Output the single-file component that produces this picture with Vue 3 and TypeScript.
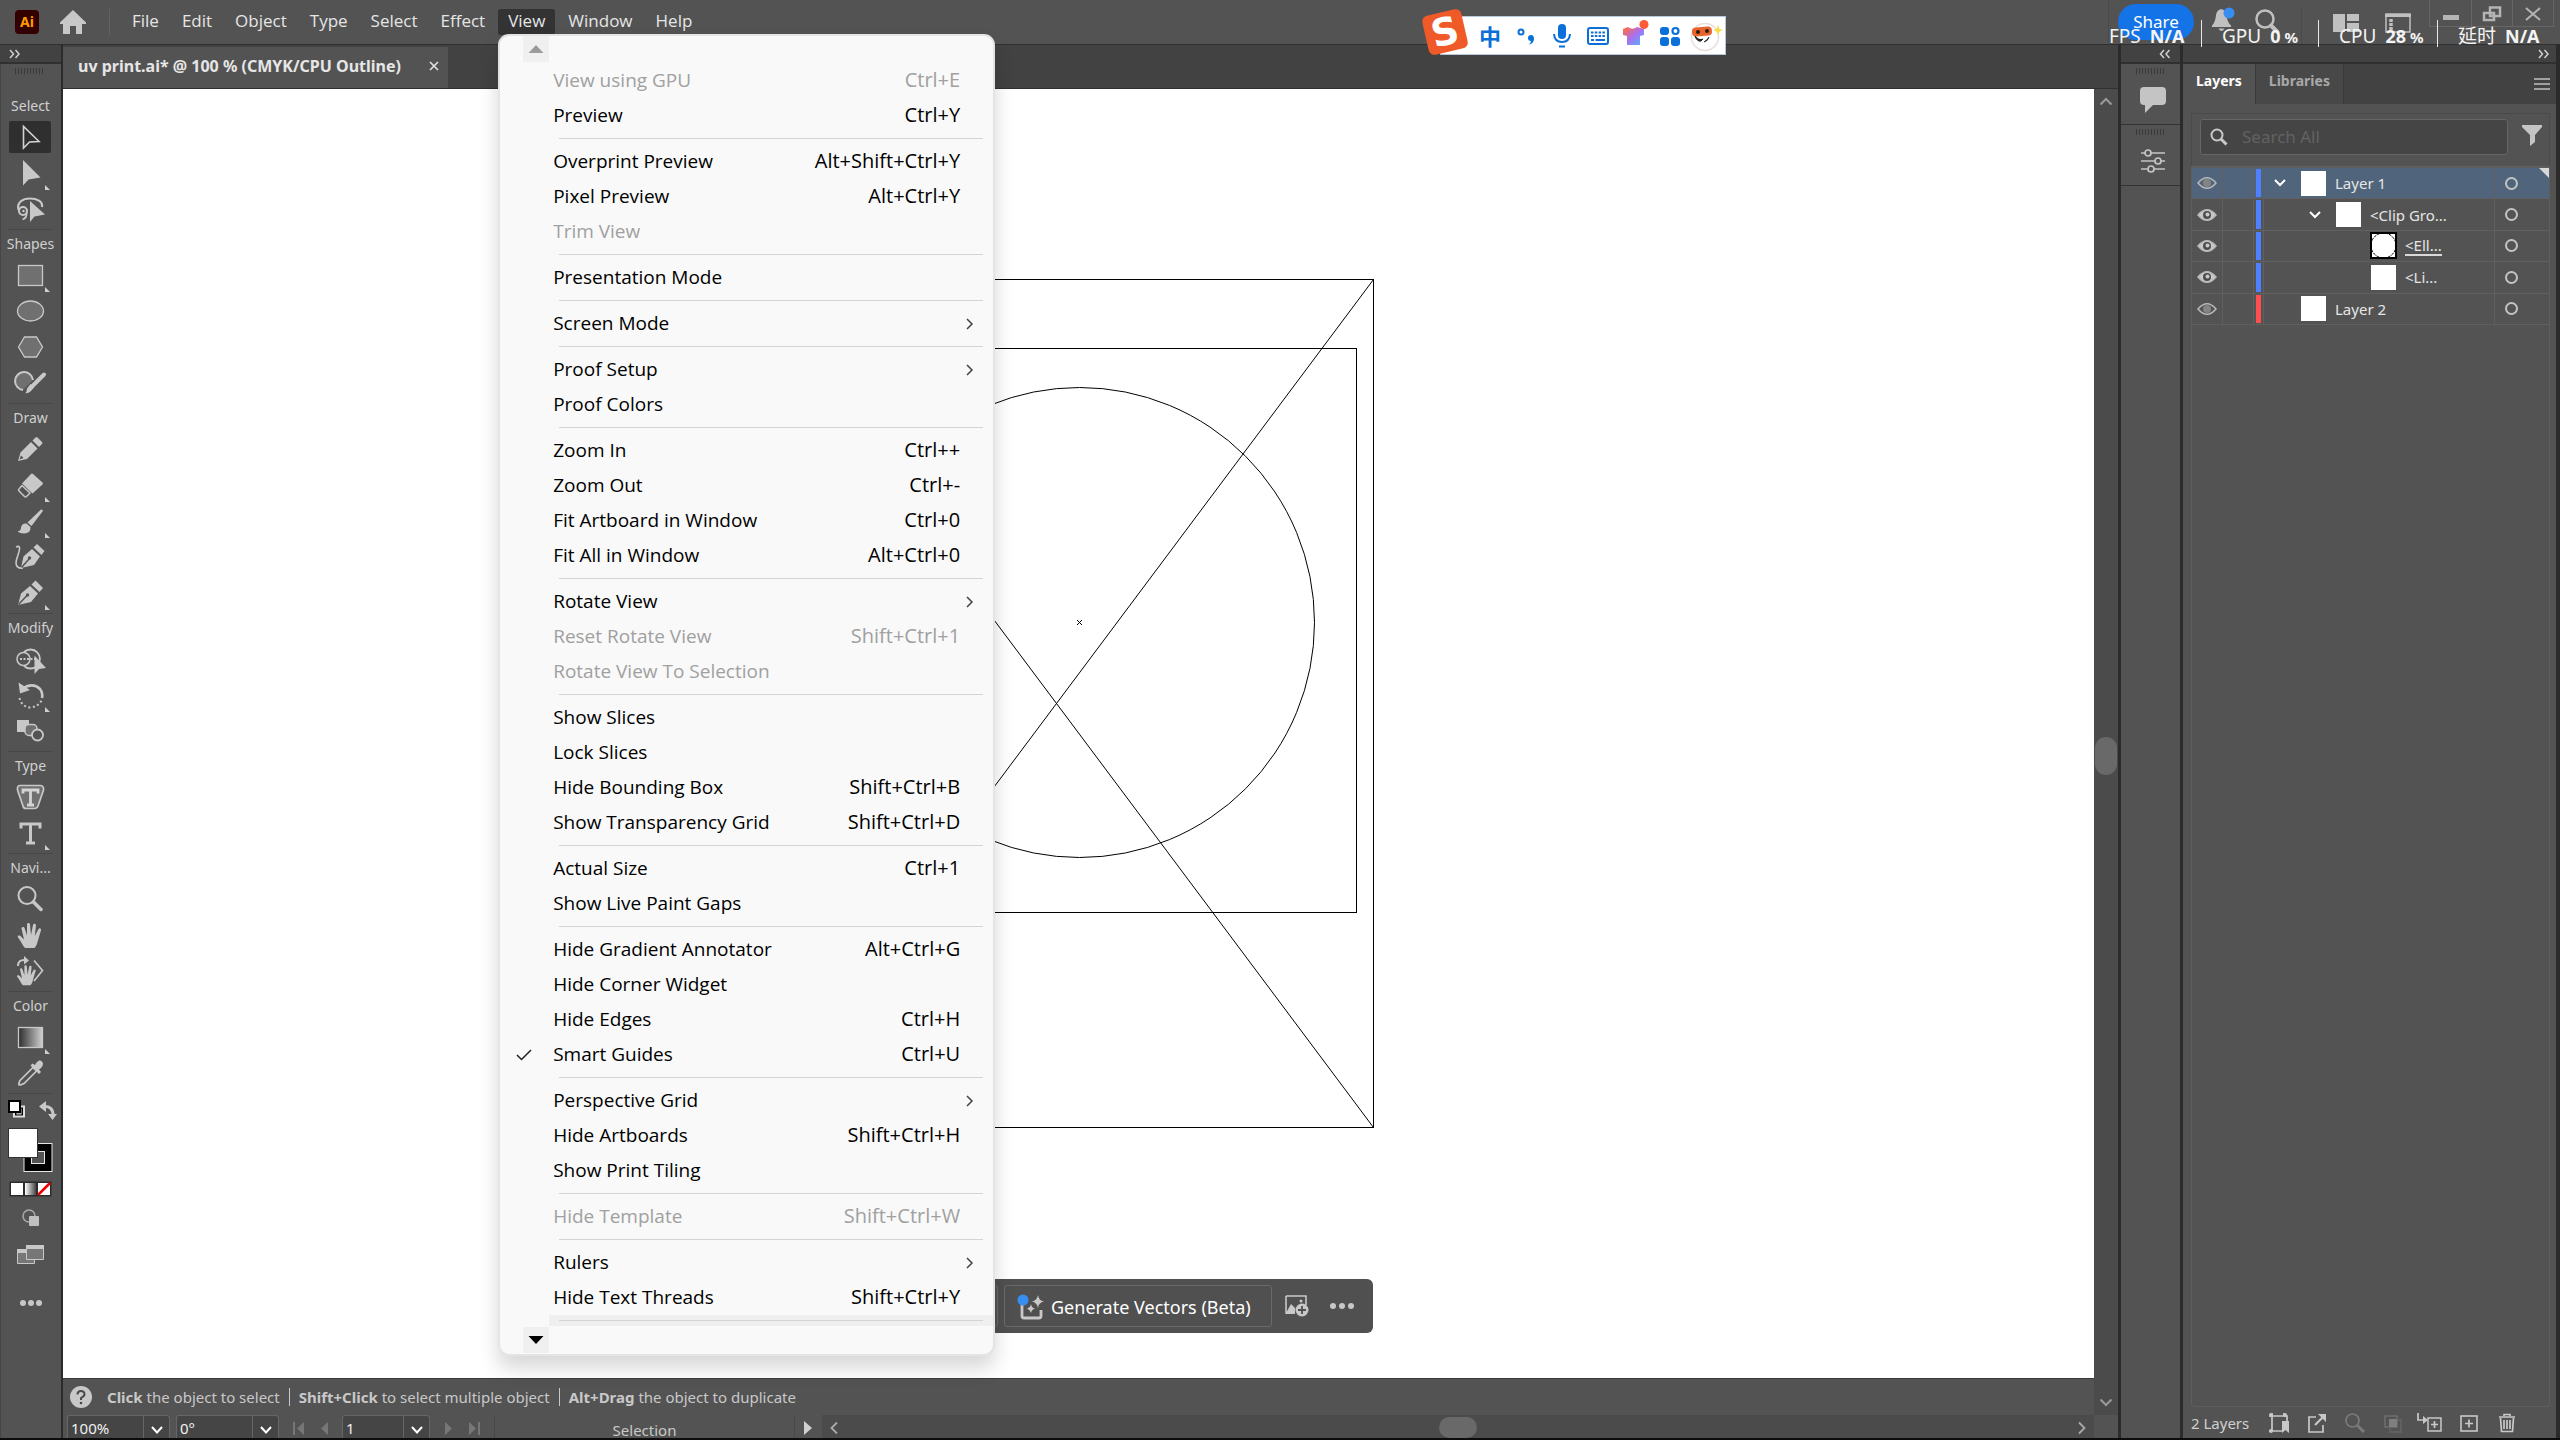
<script setup lang="ts">
interface MenuEntry {
  label?: string
  keys?: string
  disabled?: boolean
  sub?: boolean
  checked?: boolean
  sep?: boolean
}
interface Tool {
  icon: string
  name: string
  more?: boolean
  active?: boolean
}
interface Layer {
  name: string
  depth: number
  color: string
  open?: boolean
  selected?: boolean
  dim?: boolean
  clip?: boolean
}

const sep: MenuEntry = { sep: true }
const menus: string[] = ['File', 'Edit', 'Object', 'Type', 'Select', 'Effect', 'View', 'Window', 'Help']

const viewMenu: MenuEntry[] = [
  { label: 'View using GPU', keys: 'Ctrl+E', disabled: true },
  { label: 'Preview', keys: 'Ctrl+Y' },
  sep,
  { label: 'Overprint Preview', keys: 'Alt+Shift+Ctrl+Y' },
  { label: 'Pixel Preview', keys: 'Alt+Ctrl+Y' },
  { label: 'Trim View', disabled: true },
  sep,
  { label: 'Presentation Mode' },
  sep,
  { label: 'Screen Mode', sub: true },
  sep,
  { label: 'Proof Setup', sub: true },
  { label: 'Proof Colors' },
  sep,
  { label: 'Zoom In', keys: 'Ctrl++' },
  { label: 'Zoom Out', keys: 'Ctrl+-' },
  { label: 'Fit Artboard in Window', keys: 'Ctrl+0' },
  { label: 'Fit All in Window', keys: 'Alt+Ctrl+0' },
  sep,
  { label: 'Rotate View', sub: true },
  { label: 'Reset Rotate View', keys: 'Shift+Ctrl+1', disabled: true },
  { label: 'Rotate View To Selection', disabled: true },
  sep,
  { label: 'Show Slices' },
  { label: 'Lock Slices' },
  { label: 'Hide Bounding Box', keys: 'Shift+Ctrl+B' },
  { label: 'Show Transparency Grid', keys: 'Shift+Ctrl+D' },
  sep,
  { label: 'Actual Size', keys: 'Ctrl+1' },
  { label: 'Show Live Paint Gaps' },
  sep,
  { label: 'Hide Gradient Annotator', keys: 'Alt+Ctrl+G' },
  { label: 'Hide Corner Widget' },
  { label: 'Hide Edges', keys: 'Ctrl+H' },
  { label: 'Smart Guides', keys: 'Ctrl+U', checked: true },
  sep,
  { label: 'Perspective Grid', sub: true },
  { label: 'Hide Artboards', keys: 'Shift+Ctrl+H' },
  { label: 'Show Print Tiling' },
  sep,
  { label: 'Hide Template', keys: 'Shift+Ctrl+W', disabled: true },
  sep,
  { label: 'Rulers', sub: true },
  { label: 'Hide Text Threads', keys: 'Shift+Ctrl+Y' },
]

const toolGroups: { title: string; tools: Tool[] }[] = [
  {
    title: 'Select',
    tools: [
      { icon: 'select', name: 'Selection', active: true },
      { icon: 'direct', name: 'Direct Selection', more: true },
      { icon: 'lasso', name: 'Lasso' },
    ],
  },
  {
    title: 'Shapes',
    tools: [
      { icon: 'rect', name: 'Rectangle', more: true },
      { icon: 'ellipse', name: 'Ellipse' },
      { icon: 'hexagon', name: 'Polygon' },
      { icon: 'shaper', name: 'Shaper' },
    ],
  },
  {
    title: 'Draw',
    tools: [
      { icon: 'pencil', name: 'Pencil' },
      { icon: 'eraser', name: 'Eraser', more: true },
      { icon: 'brush', name: 'Paintbrush', more: true },
      { icon: 'curvature', name: 'Curvature' },
      { icon: 'pen', name: 'Pen', more: true },
    ],
  },
  {
    title: 'Modify',
    tools: [
      { icon: 'builder', name: 'Shape Builder' },
      { icon: 'rotate', name: 'Rotate', more: true },
      { icon: 'blend', name: 'Blend' },
    ],
  },
  {
    title: 'Type',
    tools: [
      { icon: 'touch', name: 'Touch Type' },
      { icon: 'type', name: 'Type', more: true },
    ],
  },
  {
    title: 'Navi...',
    tools: [
      { icon: 'zoom', name: 'Zoom' },
      { icon: 'hand', name: 'Hand' },
      { icon: 'rotateview', name: 'Rotate View' },
    ],
  },
  {
    title: 'Color',
    tools: [
      { icon: 'gradient', name: 'Gradient', more: true },
      { icon: 'dropper', name: 'Eyedropper' },
    ],
  },
]

const penNib =
  '<path d="M4 28 7 16.500 16 9 24 16.500 17 25Z" fill="#c8c8c8"/><path d="M4.500 27.500 13 18.500" stroke="#535353" stroke-width="1.500"/><circle cx="13.500" cy="18" r="1.700" fill="#535353"/><path d="M17.500 7.500 21.500 3.500 29 11 25.500 15Z" fill="#c8c8c8"/>'
const handShape =
  'M11 29 C9 27 7.500 23 4 18.500 C3 16.500 5 16 6.500 17 L10 20.500 L7.500 9.500 C7.500 7.500 10 7.500 10.500 9 L13 16.500 L13 5.500 C13 3.500 15.800 3.500 16 5.500 L17 16 L19 6 C19.500 4.200 22 4.500 22 6.500 L20.800 17 L24.500 10 C25.500 8.500 27.500 9.500 27 11.300 L23.500 23 C23 26 21.500 28 20.500 29 Z'

const toolArt: Record<string, string> = {
  select: '<path d="M9.500 5.500V27L15.500 21 25 20.500Z" fill="none" stroke="#d2d2d2" stroke-width="1.600"/>',
  direct: '<path d="M9 3V28.500L14.500 22.500 26.500 20.500Z" fill="#c8c8c8"/>',
  lasso:
    '<path d="M4.500 17C2.500 9 9 5.500 16 5.500S29 8.500 28 14" fill="none" stroke="#c8c8c8" stroke-width="2.200"/><circle cx="9" cy="18" r="4" fill="none" stroke="#c8c8c8" stroke-width="2"/><circle cx="9.500" cy="18" r="1.200" fill="#c8c8c8"/><path d="M12.500 19.500Q13 25 8.500 26.500" fill="none" stroke="#c8c8c8" stroke-width="1.800"/><path d="M16 8V29L20.500 23.500 31 21.500Z" fill="#c8c8c8"/>',
  rect: '<rect x="4.500" y="6.500" width="24" height="20" fill="#707070" stroke="#c8c8c8" stroke-width="1.300"/>',
  ellipse: '<ellipse cx="16.500" cy="16" rx="13" ry="10" fill="#707070" stroke="#c8c8c8" stroke-width="1.300"/>',
  hexagon: '<path d="M4.500 16 10.500 6H22.500L28.500 16 22.500 26H10.500Z" fill="#707070" stroke="#c8c8c8" stroke-width="1.300"/>',
  shaper:
    '<path d="M9 23A9 9 0 1 1 19 13" fill="#707070" stroke="#c8c8c8" stroke-width="2"/><path d="M30 7.500 17.500 20" stroke="#c8c8c8" stroke-width="4" stroke-linecap="round"/><path d="M16.500 17 20 20.500 17 24Q15 26 11.500 26.500 13 24 13 21.500Z" fill="#c8c8c8"/>',
  pencil:
    '<path d="M4 28 6.500 19.500 17 9 23.500 15.500 13 26Z" fill="#c8c8c8"/><path d="M18.500 7.500 21.500 4.500Q22.500 3.500 23.500 4.500L28 9Q29 10 28 11L25 14Z" fill="#c8c8c8"/><path d="M5.500 26.500 7 22.500 9.500 25Z" fill="#535353"/>',
  eraser:
    '<path d="M17 5Q18 4 19 5L28.500 13.500Q29.500 14.500 28.500 15.500L18.500 24.500 8 14.500Z" fill="#c8c8c8"/><path d="M8 16.500 16 24 12.500 27.500Q11.500 28.500 10.500 27.500L5 22Q4 21 5 20Z" fill="none" stroke="#c8c8c8" stroke-width="1.500"/>',
  brush:
    '<path d="M27 4.500Q29.500 4 28.500 6.500L17.500 21 13.500 17.500Z" fill="#c8c8c8"/><path d="M12.500 18.500 16.500 22Q17 28 10 28.500 6 28.500 3.500 26.500 7 26 7 22.500 8 18 12.500 18.500Z" fill="#c8c8c8"/>',
  curvature:
    '<path d="M2 6C8 3 5 11 3 17S2 28 9 27" fill="none" stroke="#c8c8c8" stroke-width="1.600"/><path d="M7 27 9.500 15.500 18 8 26 15.500 20 24Z" fill="#c8c8c8"/><path d="M7.500 26.500 15 18" stroke="#535353" stroke-width="1.500"/><circle cx="15.500" cy="17" r="1.700" fill="#535353"/><path d="M19.500 6.500 23 3 30.500 10 27.500 14Z" fill="#c8c8c8"/>',
  pen: penNib,
  builder:
    '<circle cx="9.500" cy="16" r="6.500" fill="none" stroke="#c8c8c8" stroke-width="1.500"/><path d="M10 9A9.500 9.500 0 1 1 10 23" fill="none" stroke="#c8c8c8" stroke-width="1.800"/><path d="M6 16H22" stroke="#c8c8c8" stroke-width="1.800" stroke-dasharray="2 1.500"/><path d="M20.500 12.500V31L25 26 32 25Z" fill="#c8c8c8"/>',
  rotate:
    '<path d="M8.500 9.500Q19 3 26 10 29 14 28 19" fill="none" stroke="#c8c8c8" stroke-width="2.600"/><path d="M4.500 3.500 6 14.500 16 11Z" fill="#c8c8c8"/><path d="M5.500 19Q8 28 16 28.500 24 28 27.500 21.500" fill="none" stroke="#c8c8c8" stroke-width="2" stroke-dasharray="2 2.500"/>',
  blend:
    '<rect x="3" y="5" width="12" height="12" fill="#c8c8c8"/><rect x="11" y="9.500" width="12" height="11" rx="4" fill="#707070" stroke="#c8c8c8" stroke-width="1.500"/><circle cx="23.500" cy="20" r="5.500" fill="#535353" stroke="#c8c8c8" stroke-width="1.800"/>',
  touch:
    '<path d="M5.500 4.500H26.500Q30 5 29.500 9L24 25Q23 27.500 20.500 27.500H12Q9.500 27.500 9 25L3.500 9Q3 5 5.500 4.500Z" fill="#707070" stroke="#c8c8c8" stroke-width="1.700"/><path d="M9 12.500V9H24V12.500M16.500 9V24M13 24H20" fill="none" stroke="#d4d4d4" stroke-width="2.800"/>',
  type: '<path d="M7 11.500V7H26V11.500M16.500 7V26M12 26H21" fill="none" stroke="#c8c8c8" stroke-width="3"/>',
  zoom: '<circle cx="13" cy="12.500" r="8.500" fill="none" stroke="#c8c8c8" stroke-width="2"/><path d="M19.500 19 27 26.500" stroke="#c8c8c8" stroke-width="3.500" stroke-linecap="round"/>',
  hand: `<path d="${handShape}" fill="#c8c8c8"/>`,
  rotateview: `<g transform="translate(0 7) scale(.8)"><path d="${handShape}" fill="#c8c8c8"/></g><path d="M4 11Q4 4.500 11 5" fill="none" stroke="#c8c8c8" stroke-width="2"/><path d="M10 1V9.500L15 5.500Z" fill="#c8c8c8"/><path d="M20 5.500 28.500 15.500 20 26" fill="none" stroke="#c8c8c8" stroke-width="1.700"/>`,
  gradient:
    '<defs><linearGradient id="toolGrad"><stop stop-color="#2c2c2c"/><stop offset="1" stop-color="#d0d0d0"/></linearGradient></defs><rect x="4.500" y="6.500" width="24" height="20" fill="url(#toolGrad)" stroke="#c8c8c8" stroke-width="1.300"/>',
  dropper:
    '<path d="M19 10.500 22.500 14 10 26.500Q7 28 5 28 4.500 26 6 23.500Z" fill="none" stroke="#c8c8c8" stroke-width="1.700"/><path d="M16.500 8.500 25 17 27 15 25 12.500Q29 10 29 6.500 28 3 25 3.500 22 5 21 8L18.500 6.500Z" fill="#c8c8c8"/>',
}

const layers: Layer[] = [
  { name: 'Layer 1', depth: 0, color: '#4f80ff', open: true, selected: true, dim: true },
  { name: '<Clip Gro...', depth: 1, color: '#4f80ff', open: true },
  { name: '<Ell...', depth: 2, color: '#4f80ff', clip: true },
  { name: '<Li...', depth: 2, color: '#4f80ff' },
  { name: 'Layer 2', depth: 0, color: '#ff4f4f', dim: true },
]

const stats: { label: string; value: string; unit?: string }[] = [
  { label: 'FPS', value: 'N/A' },
  { label: 'GPU', value: '0', unit: '%' },
  { label: 'CPU', value: '28', unit: '%' },
  { label: '延时', value: 'N/A' },
]

const layerActions: { name: string; art: string; off?: boolean }[] = [
  { name: 'Collect for Export', art: '<path d="M4 1V19H14M1 4H19V9M1 19H4M16 1V4" fill="none" stroke="#c8c8c8" stroke-width="1.700"/><circle cx="3" cy="3" r="2"/><circle cx="17" cy="3" r="2"/><circle cx="3" cy="19" r="2"/><path d="M14 9H21V21L17.500 18 14 21Z"/>' },
  { name: 'Locate', art: '<path d="M10 5H3V20H17V13" fill="none" stroke="#c8c8c8" stroke-width="1.700"/><path d="M9 13 18 4" stroke="#c8c8c8" stroke-width="2.200"/><path d="M12 2H20V10Z"/>' },
  { name: 'Find', art: '<circle cx="8.500" cy="8.500" r="6.500" fill="none" stroke="#7a7a7a" stroke-width="1.700"/><path d="M13.500 13.500 20 20" stroke="#7a7a7a" stroke-width="3"/>', off: true },
  { name: 'Make Clipping Mask', art: '<rect x="3" y="4" width="12" height="11" fill="none" stroke="#6f6f6f" stroke-width="1.500"/><rect x="8" y="8" width="11" height="12" fill="none" stroke="#656565" stroke-width="1.500"/><rect x="7" y="7" width="8" height="8" fill="#7f7f7f"/>', off: true },
  { name: 'New Sublayer', art: '<path d="M-2 1V8H5" fill="none" stroke="#c8c8c8" stroke-width="1.700"/><path d="M3 4V12L8 8Z"/><rect x="8" y="6" width="13" height="13" fill="none" stroke="#c8c8c8" stroke-width="1.500"/><path d="M14.500 9V16M11 12.500H18" stroke="#c8c8c8" stroke-width="1.700"/>' },
  { name: 'New Layer', art: '<rect x="3" y="4" width="16" height="15" fill="none" stroke="#c8c8c8" stroke-width="1.600"/><path d="M11 7.500V15.500M7 11.500H15" stroke="#c8c8c8" stroke-width="1.700"/>' },
  { name: 'Delete', art: '<path d="M3 5H19M8 4V2.500H14V4M4.500 6 5.500 19.500H16.500L17.500 6M8 8V17M11 8V17M14 8V17" fill="none" stroke="#c8c8c8" stroke-width="1.700"/>' },
]
</script>

<template>
  <div class="app">
    <header class="topbar">
      <div class="logo">Ai</div>
      <button class="home" aria-label="Home">
        <svg width="28" height="26" viewBox="0 0 28 26"><path d="M14 1 27 13.500V15H23V25H17V17H11V25H4V15H1V13.500Z" fill="#c8c8c8" /></svg>
      </button>
      <nav class="menubar" aria-label="Main menu">
        <div v-for="m in menus" :key="m" class="menu" :class="{ open: m === 'View' }">
          <button class="menu-btn">{{ m }}</button>
          <div v-if="m === 'View'" class="dropdown" role="menu">
            <button class="scroll-btn" aria-label="Scroll up">
              <svg width="16" height="8" viewBox="0 0 16 8"><path d="M8 0 15.500 8H.5Z" fill="#9b9b9b" /></svg>
            </button>
            <template v-for="(e, i) in viewMenu" :key="i">
              <hr v-if="e.sep" class="rule" />
              <button v-else class="entry" role="menuitem" :disabled="e.disabled">
                <svg v-if="e.checked" class="check" width="16" height="12" viewBox="0 0 16 12"><path d="M1 6 5.500 10.500 15 1" fill="none" stroke="#222" stroke-width="1.500" /></svg>
                <span>{{ e.label }}</span>
                <span v-if="e.keys" class="keys">{{ e.keys }}</span>
                <svg v-if="e.sub" class="sub" width="7" height="12" viewBox="0 0 7 12"><path d="M1 1 6 6 1 11" fill="none" stroke="#444" stroke-width="1.500" /></svg>
              </button>
            </template>
            <div class="rule-strip"><hr class="rule" /></div>
            <button class="scroll-btn" aria-label="Scroll down">
              <svg width="16" height="8" viewBox="0 0 16 8"><path d="M.5 0H15.500L8 8Z" fill="#000" /></svg>
            </button>
          </div>
        </div>
      </nav>
      <div class="top-right">
        <button class="share">Share</button>
        <button class="plain bell" aria-label="Notifications">
          <svg width="26" height="28" viewBox="0 0 26 28"><path d="M10 3Q15 4 15.500 9 16 16 20 19.500V21H1V19.500Q4.500 16 5 9 5.500 4.500 10 3ZM7.500 22.500H13.500Q12 25 10.500 25T7.500 22.500Z" fill="#c0c0c0" /><circle cx="18" cy="7" r="5.500" fill="#378ef0" /></svg>
        </button>
        <button class="plain find" aria-label="Search">
          <svg width="26" height="28" viewBox="0 0 26 28"><circle cx="11" cy="12" r="8.500" fill="none" stroke="#c0c0c0" stroke-width="2.500" /><path d="M17 18.500 23.500 25" stroke="#c0c0c0" stroke-width="4" stroke-linecap="round" /></svg>
        </button>
        <button class="plain arrange" aria-label="Arrange documents">
          <svg width="26" height="18" viewBox="0 0 26 18"><path d="M0 0H12V18H0ZM14 0H26V7H14ZM14 9H26V18H14Z" fill="#c0c0c0" /></svg>
        </button>
        <button class="plain workspace" aria-label="Switch workspace">
          <svg width="26" height="20" viewBox="0 0 26 20"><path d="M1 1H25V19H1Z" fill="none" stroke="#c0c0c0" stroke-width="1.500" /><path d="M0 1H26V4H0Z" fill="#c0c0c0" /><path d="M6 6V17" stroke="#c0c0c0" stroke-width="3.500" stroke-dasharray="3 1" /></svg>
        </button>
        <div class="window-btns">
          <button aria-label="Minimize"><svg width="20" height="20" viewBox="0 0 20 20"><path d="M2 11H18V16H2Z" fill="#b4b4b4" /></svg></button>
          <button aria-label="Restore"><svg width="20" height="20" viewBox="0 0 20 20"><path d="M8 3.500H18V12H8ZM2 9H12V16H2Z" fill="none" stroke="#b4b4b4" stroke-width="2.500" /></svg></button>
          <button aria-label="Close"><svg width="20" height="20" viewBox="0 0 20 20"><path d="M3 4 17 16M17 4 3 16" stroke="#b4b4b4" stroke-width="2" /></svg></button>
        </div>
      </div>
    </header>

    <div class="workspace-row">
      <aside class="toolbar">
        <div class="strip left"><svg width="12" height="10" viewBox="0 0 12 10"><path d="M1 1 4.500 5 1 9M6.500 1 10 5 6.500 9" fill="none" stroke="#d0d0d0" stroke-width="1.500" /></svg></div>
        <div class="grip-row"><i class="grip"></i></div>
        <section v-for="g in toolGroups" :key="g.title" class="tool-group">
          <h2>{{ g.title }}</h2>
          <button v-for="t in g.tools" :key="t.icon" class="tool" :class="{ active: t.active, more: t.more }" :aria-label="t.name">
            <svg width="32" height="32" viewBox="0 0 32 32" v-html="toolArt[t.icon]"></svg>
          </button>
        </section>
        <section class="paint">
          <svg width="61" height="230" viewBox="0 0 61 230">
            <g stroke-width="1">
              <rect x="14" y="13.500" width="10" height="10" fill="#000" stroke="#ddd" stroke-width="2" />
              <rect x="17" y="16" width="4" height="5" fill="#535353" stroke="#ddd" />
              <rect x="9" y="8" width="11" height="11" fill="#fff" stroke="#000" stroke-width="2" />
              <path d="M44 13.500Q53 13 53 22" fill="none" stroke="#c8c8c8" stroke-width="3" />
              <path d="M46 8V19L39 13.500ZM48 21H57L52.500 27Z" fill="#c8c8c8" />
              <rect x="24" y="50.500" width="28" height="28" fill="#000" stroke="#e6e6e6" />
              <rect x="31.500" y="58.500" width="13" height="12" fill="#535353" stroke="#e6e6e6" />
              <rect x="8.500" y="35.500" width="29" height="29" fill="#fff" stroke="#333" />
              <defs><linearGradient id="swatch"><stop stop-color="#fff" /><stop offset="1" stop-color="#444" /></linearGradient></defs>
              <rect x="9.500" y="88.500" width="42" height="15" fill="#2c2c2c" />
              <rect x="11" y="90" width="12" height="12" fill="#fff" />
              <rect x="25" y="90" width="11" height="12" fill="url(#swatch)" />
              <rect x="38" y="90" width="12" height="12" fill="#fff" />
              <path d="M38 102 50 90" stroke="#e00" stroke-width="2.500" />
              <circle cx="29" cy="123" r="6" fill="none" stroke="#aaa" stroke-width="1.500" />
              <rect x="29" y="123" width="10" height="10" rx="1" fill="#c0c0c0" />
              <path d="M17.500 156.500H34.500V170.500H17.500Z" fill="#777" stroke="#c8c8c8" />
              <path d="M17 156H35V160H17Z" fill="#c8c8c8" />
              <path d="M26.500 152.500H43.500V166.500H26.500Z" fill="#777" stroke="#c8c8c8" />
              <path d="M26 152H44V156H26Z" fill="#c8c8c8" />
              <g fill="#c8c8c8"><circle cx="23" cy="210" r="3" /><circle cx="31" cy="210" r="3" /><circle cx="39" cy="210" r="3" /></g>
            </g>
          </svg>
        </section>
      </aside>

      <main class="document">
        <div class="tabs">
          <div class="doc-tab">
            <span>uv print.ai* @ 100 % (CMYK/CPU Outline)</span>
            <button class="plain" aria-label="Close document"><svg width="10" height="10" viewBox="0 0 10 10"><path d="M1 1 9 9M9 1 1 9" stroke="#e0e0e0" stroke-width="1.700" /></svg></button>
          </div>
        </div>
        <div class="stage">
          <div class="left-part">
            <div class="canvas">
              <svg class="art" width="1400" height="1289" viewBox="0 0 1400 1289" fill="none" stroke="#000" stroke-width="1">
                <rect x="676.500" y="190.500" width="634" height="848" />
                <rect x="700.500" y="259.500" width="593" height="564" />
                <path d="M1310.500 190.500 676.500 1038.500M676.500 190.500 1310.500 1038.500" />
                <circle cx="1016.500" cy="533.500" r="235" />
                <path d="M1014 531 1019 536M1019 531 1014 536" />
              </svg>
              <div class="context-bar">
                <button class="ghost" aria-label="Edit"></button>
                <button class="generate">
                  <svg width="28" height="28" viewBox="0 0 28 28"><path d="M5 12V23Q5 25 7 25H22Q24 25 24 23V17" fill="none" stroke="#c8c8c8" stroke-width="2.800" /><path d="M21 2Q21.500 7.500 27 8.500 21.500 9.500 21 15 20 9.500 15 8.500 20 7.500 21 2ZM14 11Q14.500 15 18 15.500 14.500 16.500 14 20 13 16.500 10 15.500 13.500 14.500 14 11Z" fill="#c8c8c8" /><circle cx="6" cy="7" r="5.500" fill="#378ef0" /></svg>
                  <span>Generate Vectors (Beta)</span>
                </button>
                <button class="plain" aria-label="Place image"><svg width="24" height="22" viewBox="0 0 24 22"><path d="M1 1H21V10M1 1V18H10" fill="none" stroke="#c8c8c8" stroke-width="1.600" /><path d="M1 18 6 9 10 13V19H1Z" fill="#c8c8c8" /><circle cx="16" cy="6" r="1.500" fill="#c8c8c8" /><circle cx="17" cy="15" r="6.500" fill="#c8c8c8" /><path d="M17 11V19M13 15H21" stroke="#505050" stroke-width="1.800" /></svg></button>
                <button class="plain" aria-label="More options"><svg width="26" height="8" viewBox="0 0 26 8" fill="#c8c8c8"><circle cx="4" cy="4" r="3" /><circle cx="13" cy="4" r="3" /><circle cx="22" cy="4" r="3" /></svg></button>
              </div>
            </div>
            <div class="hint">
              <svg width="22" height="22" viewBox="0 0 22 22"><circle cx="11" cy="11" r="11" fill="#c8c8c8" /><path d="M7.500 8.500Q7.500 5 11 5T14.500 8.500Q14.500 10 11 12V14" fill="none" stroke="#4a4a4a" stroke-width="2" /><circle cx="11" cy="17" r="1.300" fill="#4a4a4a" /></svg>
              <p><b>Click</b> the object to select</p>
              <i></i>
              <p><b>Shift+Click</b> to select multiple object</p>
              <i></i>
              <p><b>Alt+Drag</b> the object to duplicate</p>
            </div>
          </div>
          <div class="vscroll">
            <svg width="14" height="9" viewBox="0 0 14 9"><path d="M1.500 7.500 7 2 12.500 7.500" fill="none" stroke="#9a9a9a" stroke-width="2" /></svg>
            <div class="thumb"></div>
            <svg width="14" height="9" viewBox="0 0 14 9"><path d="M1.500 1.500 7 7 12.500 1.500" fill="none" stroke="#9a9a9a" stroke-width="2" /></svg>
          </div>
        </div>
        <footer class="status">
          <label class="combo"><select aria-label="Zoom level"><option>100%</option></select><span class="drop"><svg width="12" height="8" viewBox="0 0 12 8"><path d="M1 1 6 6.500 11 1" fill="none" stroke="#fff" stroke-width="2" /></svg></span></label>
          <label class="combo"><select aria-label="Rotate view angle"><option>0°</option></select><span class="drop"><svg width="12" height="8" viewBox="0 0 12 8"><path d="M1 1 6 6.500 11 1" fill="none" stroke="#fff" stroke-width="2" /></svg></span></label>
          <div class="pager">
            <button class="plain" aria-label="First artboard"><svg width="12" height="13" viewBox="0 0 12 13"><path d="M0 0H2V13H0ZM11 0V13L4 6.500Z" fill="#777" /></svg></button>
            <button class="plain" aria-label="Previous artboard"><svg width="8" height="13" viewBox="0 0 8 13"><path d="M8 0V13L1 6.500Z" fill="#777" /></svg></button>
          </div>
          <label class="combo small"><select aria-label="Artboard"><option>1</option></select><span class="drop"><svg width="12" height="8" viewBox="0 0 12 8"><path d="M1 1 6 6.500 11 1" fill="none" stroke="#fff" stroke-width="2" /></svg></span></label>
          <div class="pager">
            <button class="plain" aria-label="Next artboard"><svg width="8" height="13" viewBox="0 0 8 13"><path d="M0 0V13L7 6.500Z" fill="#777" /></svg></button>
            <button class="plain" aria-label="Last artboard"><svg width="12" height="13" viewBox="0 0 12 13"><path d="M10 0H12V13H10ZM1 0V13L8 6.500Z" fill="#777" /></svg></button>
          </div>
          <div class="mode">Selection</div>
          <button class="plain play" aria-label="Show status options"><svg width="9" height="14" viewBox="0 0 9 14"><path d="M0 0V14L8 7Z" fill="#d0d0d0" /></svg></button>
          <div class="hscroll">
            <svg width="8" height="14" viewBox="0 0 8 14"><path d="M7 1.500 1.500 7 7 12.500" fill="none" stroke="#aaa" stroke-width="1.800" /></svg>
            <div class="thumb"></div>
            <svg width="8" height="14" viewBox="0 0 8 14"><path d="M1 1.500 6.500 7 1 12.500" fill="none" stroke="#aaa" stroke-width="1.800" /></svg>
          </div>
        </footer>
      </main>

      <aside class="dock">
        <div class="strip right"><svg width="12" height="10" viewBox="0 0 12 10"><path d="M5 1 1.500 5 5 9M10.500 1 7 5 10.500 9" fill="none" stroke="#d0d0d0" stroke-width="1.500" /></svg></div>
        <div class="dock-cell">
          <i class="grip"></i>
          <button class="plain" aria-label="Comments"><svg width="28" height="28" viewBox="0 0 28 28"><path d="M5 1H23Q27 1 27 5V15Q27 19 23 19H14L6 27V19H5Q1 19 1 15V5Q1 1 5 1Z" fill="#c4c4c4" /></svg></button>
        </div>
        <div class="dock-cell">
          <i class="grip"></i>
          <button class="plain" aria-label="Properties"><svg width="28" height="28" viewBox="0 0 28 28"><path d="M2 6H26M2 14H26M2 22H26" stroke="#c4c4c4" stroke-width="1.600" /><g fill="#535353" stroke="#c4c4c4" stroke-width="1.700"><circle cx="9" cy="6" r="3" /><circle cx="19" cy="14" r="3" /><circle cx="12" cy="22" r="3" /></g></svg></button>
        </div>
      </aside>

      <aside class="panel">
        <div class="strip right"><svg width="12" height="10" viewBox="0 0 12 10"><path d="M1 1 4.500 5 1 9M6.500 1 10 5 6.500 9" fill="none" stroke="#d0d0d0" stroke-width="1.500" /></svg></div>
        <div class="panel-tabs">
          <button class="ptab on">Layers</button>
          <button class="ptab">Libraries</button>
          <button class="plain burger" aria-label="Panel menu"><svg width="16" height="12" viewBox="0 0 16 12"><path d="M0 1H16M0 6H16M0 11H16" stroke="#c0c0c0" stroke-width="1.500" /></svg></button>
        </div>
        <div class="search-frame">
          <div class="search">
            <svg width="18" height="18" viewBox="0 0 18 18"><circle cx="7" cy="7" r="5.500" fill="none" stroke="#c8c8c8" stroke-width="2" /><path d="M11 11 16.500 16.500" stroke="#c8c8c8" stroke-width="3" /></svg>
            <input type="text" placeholder="Search All" aria-label="Search layers" />
          </div>
          <button class="plain" aria-label="Filter"><svg width="20" height="22" viewBox="0 0 20 22"><path d="M0 0H20V2L13 10V17L8 21V10L0 2Z" fill="#c4c4c4" /></svg></button>
        </div>
        <div class="list-frame">
          <ul class="layers">
            <li v-for="l in layers" :key="l.name" :class="{ selected: l.selected }">
              <button class="eye plain" aria-label="Toggle visibility">
                <svg width="20" height="14" viewBox="0 0 20 14">
                  <path d="M1 7Q10-3.500 19 7 10 17.500 1 7Z" :fill="l.dim ? 'none' : '#c8c8c8'" stroke="#b8b8b8" stroke-width="1.500" />
                  <circle cx="10" cy="7" r="4" :fill="l.dim ? '#848484' : '#4c4c4c'" />
                  <circle v-if="!l.dim" cx="10.500" cy="6.500" r="2" fill="#c8c8c8" />
                </svg>
              </button>
              <span class="lock"></span>
              <span class="swatch"><i :style="{ background: l.color }"></i></span>
              <span class="name-cell" :style="{ paddingLeft: l.depth * 35 + 'px' }">
                <span class="twist"><svg v-if="l.open" width="12" height="8" viewBox="0 0 12 8"><path d="M1 1 6 6 11 1" fill="none" stroke="#fff" stroke-width="2" /></svg></span>
                <span class="chip" :class="{ clip: l.clip }"><svg v-if="l.clip" width="23" height="23" viewBox="0 0 23 23"><circle cx="11.500" cy="11.500" r="12.500" fill="none" stroke="#000" stroke-dasharray="3 1" /></svg></span>
                <span class="label" :class="{ under: l.clip }">{{ l.name }}</span>
              </span>
              <span class="target"><i></i></span>
            </li>
          </ul>
        </div>
        <div class="panel-foot">
          <span class="count">2 Layers</span>
          <button v-for="a in layerActions" :key="a.name" class="plain" :aria-label="a.name" :disabled="a.off"><svg width="22" height="22" viewBox="0 0 22 22" fill="#c8c8c8" v-html="a.art"></svg></button>
        </div>
      </aside>
    </div>

    <div class="ime">
      <div class="ime-logo"><span>S</span></div>
      <button class="plain zh">中</button>
      <button class="plain" aria-label="Punctuation"><svg width="24" height="24" viewBox="0 0 24 24"><circle cx="7" cy="8" r="2.500" fill="none" stroke="#0a6fd8" stroke-width="2" /><path d="M17 11A3 3 0 1 0 17 17Q17 19 14.500 20.500 20.500 19.500 20 14 19.500 11 17 11Z" fill="#0a6fd8" /></svg></button>
      <button class="plain" aria-label="Voice input"><svg width="24" height="24" viewBox="0 0 24 24"><rect x="8" y="0" width="8" height="15" rx="4" fill="#0a6fd8" /><path d="M4 10Q4.500 18 12 18T20 10M9 22.500H15" fill="none" stroke="#0a6fd8" stroke-width="2" /></svg></button>
      <button class="plain" aria-label="Keyboard"><svg width="24" height="24" viewBox="0 0 24 24"><rect x="2" y="4" width="20" height="16" rx="2" fill="none" stroke="#0a6fd8" stroke-width="2" /><path d="M5 8.500H19M5 12H19" stroke="#0a6fd8" stroke-width="2" stroke-dasharray="2.500 1.300" /><path d="M5 16H8M9.500 16H19" stroke="#0a6fd8" stroke-width="2" /></svg></button>
      <button class="plain" aria-label="Skins"><svg width="28" height="28" viewBox="0 0 28 28"><defs><linearGradient id="shirt" x1="0" y1="0" x2="1" y2="1"><stop offset=".1" stop-color="#ff6a4a" /><stop offset=".5" stop-color="#a970f0" /><stop offset="1" stop-color="#4db8ff" /></linearGradient></defs><path d="M3 7 8 5Q12 8.500 17 5L24 7V13L20 14V23H7V14L3 13Z" fill="url(#shirt)" /><circle cx="24" cy="2.500" r="4.500" fill="#ff5a36" /></svg></button>
      <button class="plain" aria-label="Toolbox"><svg width="24" height="24" viewBox="0 0 24 24" fill="#0a6fd8"><rect x="2" y="3" width="9" height="8" rx="3" /><rect x="2" y="13" width="9" height="9" rx="3" /><rect x="13" y="13" width="9" height="9" rx="3" /><circle cx="17.500" cy="7" r="3" fill="none" stroke="#0a6fd8" stroke-width="2.200" /></svg></button>
      <button class="plain" aria-label="Mascot"><svg width="34" height="32" viewBox="0 0 34 32"><circle cx="16" cy="17" r="13.500" fill="#fff" stroke="#e9dede" stroke-width="1.500" /><rect x="3" y="7" width="20" height="9" rx="4" fill="#e8622a" transform="rotate(-5 13 12)" /><circle cx="9" cy="12" r="2" fill="#2a1a10" /><circle cx="18" cy="11" r="2" fill="#2a1a10" /><path d="M6 16Q10 21 14 19L12 21Q8 22 6 16ZM15 22Q19 21 20 17" fill="#222" stroke="#222" /><path d="M29 5 30.500 9 34 10 30.500 11.500 29 15 27.500 11.500 24 10 27.500 9Z" fill="#f8dc4a" /></svg></button>
    </div>

    <dl class="stats">
      <div v-for="s in stats" :key="s.label">
        <dt>{{ s.label }}</dt>
        <dd>{{ s.value }}<small v-if="s.unit">{{ s.unit }}</small></dd>
      </div>
    </dl>
  </div>
</template>

<style>
body {
  background: #111;
}
</style>

<style scoped>
* {
  box-sizing: border-box;
}
svg {
  display: block;
  overflow: visible;
}
button {
  font: inherit;
  color: inherit;
  border: 0;
  padding: 0;
  background: none;
}
.plain {
  display: flex;
  align-items: center;
  justify-content: center;
}
.app {
  position: relative;
  display: flex;
  flex-direction: column;
  height: 100vh;
  padding-bottom: 2px;
  background: #0c0c0c;
  overflow: hidden;
  font-family: "Noto Sans", "Noto Sans CJK SC", sans-serif;
  font-size: 16px;
  color: #e6e6e6;
}

/* top bar */
.topbar {
  display: flex;
  align-items: center;
  height: 44px;
  flex: none;
  background: #535353;
}
.logo {
  width: 24px;
  height: 24px;
  margin-left: 15px;
  border-radius: 4px;
  background: #330000;
  color: #ff9a00;
  font-size: 14px;
  line-height: 23px;
  font-weight: 700;
  text-align: center;
}
.home {
  margin-left: 20px;
}
.menubar {
  display: flex;
  gap: 3px;
  margin-left: 22px;
  padding-left: 12px;
  border-left: 1px solid #626262;
  font-family: "Open Sans", "Noto Sans", sans-serif;
  font-size: 17px;
}
.menu {
  position: relative;
}
.menu-btn {
  height: 26px;
  padding: 0 10px 2px;
  line-height: 24px;
  border-radius: 3px;
}
.menu.open .menu-btn {
  background: #333;
}
.dropdown {
  position: absolute;
  z-index: 20;
  top: 25px;
  left: 0;
  width: 497px;
  background: #f9f9f9;
  border: 2px solid #e4e4e4;
  border-radius: 11px;
  box-shadow: 0 12px 20px rgba(0, 0, 0, 0.16);
  color: #000;
  font-size: 19px;
}
.scroll-btn {
  display: flex;
  align-items: center;
  justify-content: center;
  width: 26px;
  height: 26px;
  margin: 0 0 1px 23px;
  background: #f0f0f0;
}
.entry {
  display: flex;
  align-items: center;
  position: relative;
  width: 100%;
  height: 35px;
  padding: 0 33px 1px 53px;
  line-height: 24px;
}
.entry:disabled {
  color: #a0a0a0;
}
.keys {
  margin-left: auto;
  font-size: 20px;
}
.check {
  position: absolute;
  left: 16px;
  top: 12px;
}
.sub {
  position: absolute;
  right: 20px;
  top: 12px;
}
.rule {
  height: 1px;
  margin: 5px 10px 5px 59px;
  border: 0;
  background: #d4d4d4;
}
.rule-strip {
  margin: 0 0 1px 49px;
  background: #efefef;
  overflow: hidden;
}
.rule-strip .rule {
  margin-left: 10px;
}
.top-right {
  display: flex;
  align-items: flex-start;
  height: 44px;
  margin-left: auto;
  padding-left: 9px;
  border-left: 1px solid #4a4a4a;
}
.share {
  width: 76px;
  height: 36px;
  margin-top: 4px;
  border-radius: 18px;
  background: #1473e6;
  color: #fff;
  font-size: 17px;
  line-height: 36px;
}
.bell {
  margin: 6px 0 0 17px;
}
.find {
  margin: 7px 0 0 17px;
  width: 48px;
  justify-content: flex-start;
  height: 37px;
  align-items: flex-start;
  border-right: 1px solid #4a4a4a;
}
.arrange {
  margin: 14px 0 0 31px;
}
.workspace {
  margin: 13px 0 0 26px;
}
.window-btns {
  display: flex;
  height: 27px;
  margin: 0 6px 0 18px;
  border: 1px solid #666;
  border-top: 0;
}
.window-btns button {
  display: flex;
  justify-content: center;
  width: 41px;
  padding-top: 4px;
}
.window-btns button + button {
  border-left: 1px solid #666;
}

/* main row */
.workspace-row {
  display: flex;
  flex: 1;
  min-height: 0;
  background: #2b2b2b;
}
.strip {
  display: flex;
  align-items: center;
  height: 20px;
  background: #424242;
  border-top: 1px solid #303030;
  border-bottom: 2px solid #303030;
}
.strip.left {
  padding-left: 9px;
}
.strip.right {
  justify-content: flex-end;
  padding-right: 9px;
}
.panel .strip.right {
  padding-right: 6px;
}
.grip {
  display: block;
  width: 29px;
  height: 6px;
  background: repeating-linear-gradient(90deg, #3a3a3a 0 1px, #535353 1px 3px);
}

/* toolbar */
.toolbar {
  width: 61px;
  flex: none;
  background: #535353;
  box-shadow: inset 1px 0 #464646;
}
.grip-row {
  height: 27px;
  padding: 4px 0 0 15px;
}
.tool-group {
  position: relative;
  display: flex;
  flex-direction: column;
  padding: 1px 0 2px;
}
.tool-group + .tool-group::before,
.paint::before {
  content: "";
  position: absolute;
  top: 0;
  left: 8px;
  right: 8px;
  height: 1px;
  background: #474747;
}
.tool-group h2 {
  height: 27px;
  margin: 0;
  font-size: 14px;
  line-height: 28px;
  font-weight: 400;
  text-align: center;
  color: #d0d0d0;
}
.tool {
  position: relative;
  display: flex;
  align-items: center;
  justify-content: center;
  width: 42px;
  height: 32px;
  margin: 2px 0 2px 9px;
}
.tool.active {
  background: #2f2f2f;
  border-radius: 2px;
}
.tool.more::after {
  content: "";
  position: absolute;
  right: 1px;
  bottom: -1px;
  border: 5px solid transparent;
  border-left-width: 0;
  border-top-width: 0;
  border-bottom-color: #d0d0d0;
}
.paint {
  position: relative;
}

/* document */
.document {
  display: flex;
  flex-direction: column;
  flex: 1;
  min-width: 0;
  margin: 0 3px 0 2px;
}
.tabs {
  display: flex;
  height: 45px;
  flex: none;
  padding-top: 2px;
  background: #424242;
  border-top: 1px solid #303030;
  border-bottom: 1px solid #303030;
}
.doc-tab {
  display: flex;
  align-items: center;
  padding: 0 9px 3px 15px;
  background: #535353;
  font-size: 16px;
  line-height: 24px;
  font-weight: 700;
}
.doc-tab .plain {
  margin-left: 28px;
}
.stage {
  display: flex;
  flex: 1;
  min-height: 0;
}
.left-part {
  display: flex;
  flex-direction: column;
  flex: 1;
  min-width: 0;
}
.canvas {
  position: relative;
  flex: 1;
  min-height: 0;
  background: #fff;
  overflow: hidden;
}
.context-bar {
  position: absolute;
  left: 797px;
  top: 1190px;
  display: flex;
  align-items: center;
  height: 54px;
  padding-right: 18px;
  background: #505050;
  border-radius: 6px;
  color: #fff;
}
.ghost {
  width: 138px;
  height: 42px;
  border: 1px solid #6a6a6a;
  border-radius: 3px;
}
.generate {
  display: flex;
  align-items: center;
  gap: 6px;
  height: 42px;
  margin: 0 13px 0 6px;
  padding: 1px 20px 0 12px;
  border: 1px solid #6a6a6a;
  border-radius: 3px;
  font-size: 18px;
  line-height: 24px;
}
.context-bar .plain + .plain {
  margin-left: 20px;
}
.hint {
  display: flex;
  align-items: center;
  height: 37px;
  flex: none;
  padding-left: 7px;
  background: #535353;
  border-top: 1px solid #3a3a3a;
  font-size: 15px;
  color: #c8c8c8;
}
.hint p {
  margin: 0 9px;
}
.hint svg {
  margin-right: 6px;
}
.hint i {
  width: 1px;
  height: 18px;
  background: #c8c8c8;
}
.vscroll {
  display: flex;
  flex-direction: column;
  align-items: center;
  justify-content: space-between;
  width: 24px;
  padding: 8px 0;
  background: #4b4b4b;
}
.thumb {
  border-radius: 12px;
  background: #696969;
}
.vscroll .thumb {
  width: 22px;
  height: 38px;
  margin-top: 8px;
}
.status {
  display: flex;
  height: 23px;
  flex: none;
  padding-left: 4px;
  background: #535353;
}
.combo {
  position: relative;
  display: flex;
  width: 103px;
  height: 23px;
  margin-right: 6px;
  border: 1px solid #666;
  border-bottom: 0;
  border-radius: 3px 3px 0 0;
  background: #454545;
}
.combo.small {
  width: 88px;
  margin: 0;
}
.combo select {
  flex: 1;
  min-width: 0;
  padding: 2px 0 0 3px;
  appearance: none;
  border: 0;
  background: transparent;
  color: #f0f0f0;
  font: 15px/20px "Noto Sans", sans-serif;
}
.drop {
  display: flex;
  justify-content: center;
  width: 26px;
  padding-top: 10px;
  border-left: 1px solid #666;
  pointer-events: none;
}
.pager {
  display: flex;
  justify-content: space-between;
  width: 35px;
  height: 26px;
  margin: 0 14px 0 8px;
}
.small + .pager {
  margin: 0 14px 0 15px;
}
.mode {
  width: 301px;
  height: 23px;
  padding-top: 5px;
  border: 1px solid #484848;
  border-width: 0 1px;
  font-size: 15px;
  line-height: 20px;
  text-align: center;
  color: #c8c8c8;
}
.play {
  height: 26px;
  margin: 0 9px;
}
.hscroll {
  display: flex;
  flex: 1;
  align-items: center;
  justify-content: space-between;
  height: 23px;
  margin-right: 24px;
  padding: 2px 8px 0;
  background: #4b4b4b;
}
.hscroll .thumb {
  width: 38px;
  height: 21px;
}

/* icon dock */
.dock {
  width: 59px;
  flex: none;
  margin-right: 3px;
  background: #535353;
}
.dock-cell {
  height: 61px;
  padding: 4px 0 0 15px;
  border-bottom: 1px solid #333;
}
.dock-cell .plain {
  margin: 12px 0 0 3px;
}

/* layers panel */
.panel {
  display: flex;
  flex-direction: column;
  width: 373px;
  flex: none;
  margin-right: 4px;
  background: #535353;
}
.panel .strip {
  flex: none;
}
.panel-tabs {
  display: flex;
  height: 40px;
  flex: none;
  background: #424242;
}
.ptab {
  padding: 0 13px 6px;
  background: #484848;
  border-right: 1px solid #3a3a3a;
  font-size: 14px;
  line-height: 24px;
  font-weight: 700;
  color: #a8a8a8;
}
.ptab.on {
  background: #535353;
  color: #fff;
}
.burger {
  margin: 0 6px 0 auto;
}
.search-frame {
  display: flex;
  align-items: center;
  height: 53px;
  flex: none;
  margin: 9px 6px 0 8px;
  padding: 0 7px 8px 8px;
  border: 1px solid #4a4a4a;
  border-bottom: 0;
}
.search {
  display: flex;
  flex: 1;
  align-items: center;
  gap: 14px;
  height: 36px;
  margin: 2px 14px 0 0;
  padding-left: 9px;
  border: 1px solid #666;
  border-radius: 3px;
  background: #454545;
}
.search input {
  flex: 1;
  min-width: 0;
  padding: 0;
  border: 0;
  outline: 0;
  background: transparent;
  color: #e6e6e6;
  font: 17px/24px "Noto Sans", sans-serif;
}
.search input::placeholder {
  color: #626262;
}
.list-frame {
  flex: 1;
  min-height: 0;
  margin: 0 6px 0 8px;
  border: 1px solid #5e5e5e;
  border-top-width: 2px;
  border-radius: 0 0 4px 4px;
}
.layers {
  display: grid;
  grid-auto-rows: 1fr;
  height: 157px;
  margin: 0;
  padding: 0;
  list-style: none;
}
.layers li {
  position: relative;
  display: flex;
  border-bottom: 1px solid #606060;
}
.layers li.selected {
  background: #50657b;
}
.layers li.selected::after {
  content: "";
  position: absolute;
  top: 0;
  right: 0;
  border: 5px solid #d8d8d8;
  border-left-color: transparent;
  border-bottom-color: transparent;
}
.eye {
  width: 31px;
  border-right: 1px solid #606060;
}
.lock {
  width: 31px;
  border-right: 1px solid #606060;
}
.swatch {
  width: 10px;
  padding: 1px 2px;
  border-right: 1px solid #606060;
}
.swatch i {
  display: block;
  width: 5px;
  height: 100%;
}
.name-cell {
  display: flex;
  flex: 1;
  align-items: center;
  border-right: 1px solid #606060;
}
.twist {
  display: flex;
  justify-content: center;
  width: 31px;
}
.chip {
  width: 25px;
  height: 25px;
  margin: 0 9px 0 6px;
  background: #fff;
}
.chip.clip {
  border: 1px solid #000;
  outline: 1px solid #000;
  overflow: hidden;
}
.label {
  font-size: 15px;
  line-height: 20px;
  white-space: nowrap;
}
.label.under {
  border-bottom: 2px solid #d8d8d8;
  line-height: 18px;
}
.target {
  display: flex;
  align-items: center;
  width: 54px;
  padding-left: 10px;
}
.target i {
  width: 13px;
  height: 13px;
  border: 2px solid #c4c4c4;
  border-radius: 50%;
}
.panel-foot {
  display: flex;
  align-items: center;
  height: 31px;
  flex: none;
  padding-left: 8px;
}
.count {
  width: 77px;
  font-size: 15px;
  color: #d0d0d0;
}
.panel-foot button {
  width: 22px;
  margin-right: 16px;
}

/* input method bar */
.ime {
  position: absolute;
  z-index: 30;
  top: 16px;
  left: 1440px;
  display: flex;
  align-items: center;
  width: 286px;
  height: 39px;
  padding-left: 31px;
  background: #fff;
  border: 1px solid #b8c8dc;
}
.ime .plain {
  width: 36px;
  flex: none;
}
.ime-logo {
  position: absolute;
  left: -16px;
  top: -5px;
  width: 40px;
  height: 40px;
  border-radius: 6px;
  background: #f05a28;
  transform: rotate(-13deg);
  color: #fff;
  font: 700 38px/40px "DejaVu Sans", sans-serif;
  text-align: center;
}
.ime .zh {
  padding-bottom: 2px;
  color: #0a6fd8;
  font: 700 22px/30px "Noto Sans CJK SC", sans-serif;
}

/* performance overlay */
.stats {
  position: absolute;
  z-index: 30;
  top: 20px;
  right: 0;
  display: grid;
  grid-template-columns: 112px 117px 119px 123px;
  margin: 0;
  color: #f4f4f4;
}
.stats div {
  display: flex;
  gap: 9px;
  align-items: baseline;
  height: 27px;
  padding: 6px 0 0 20px;
  line-height: 20px;
  font-size: 18px;
}
.stats div + div {
  border-left: 1px solid #e8e8e8;
}
.stats dt {
  font-size: 19px;
}
.stats dd {
  margin: 0;
  font-weight: 700;
}
.stats small {
  margin-left: 4px;
  font-size: 15px;
}
</style>
